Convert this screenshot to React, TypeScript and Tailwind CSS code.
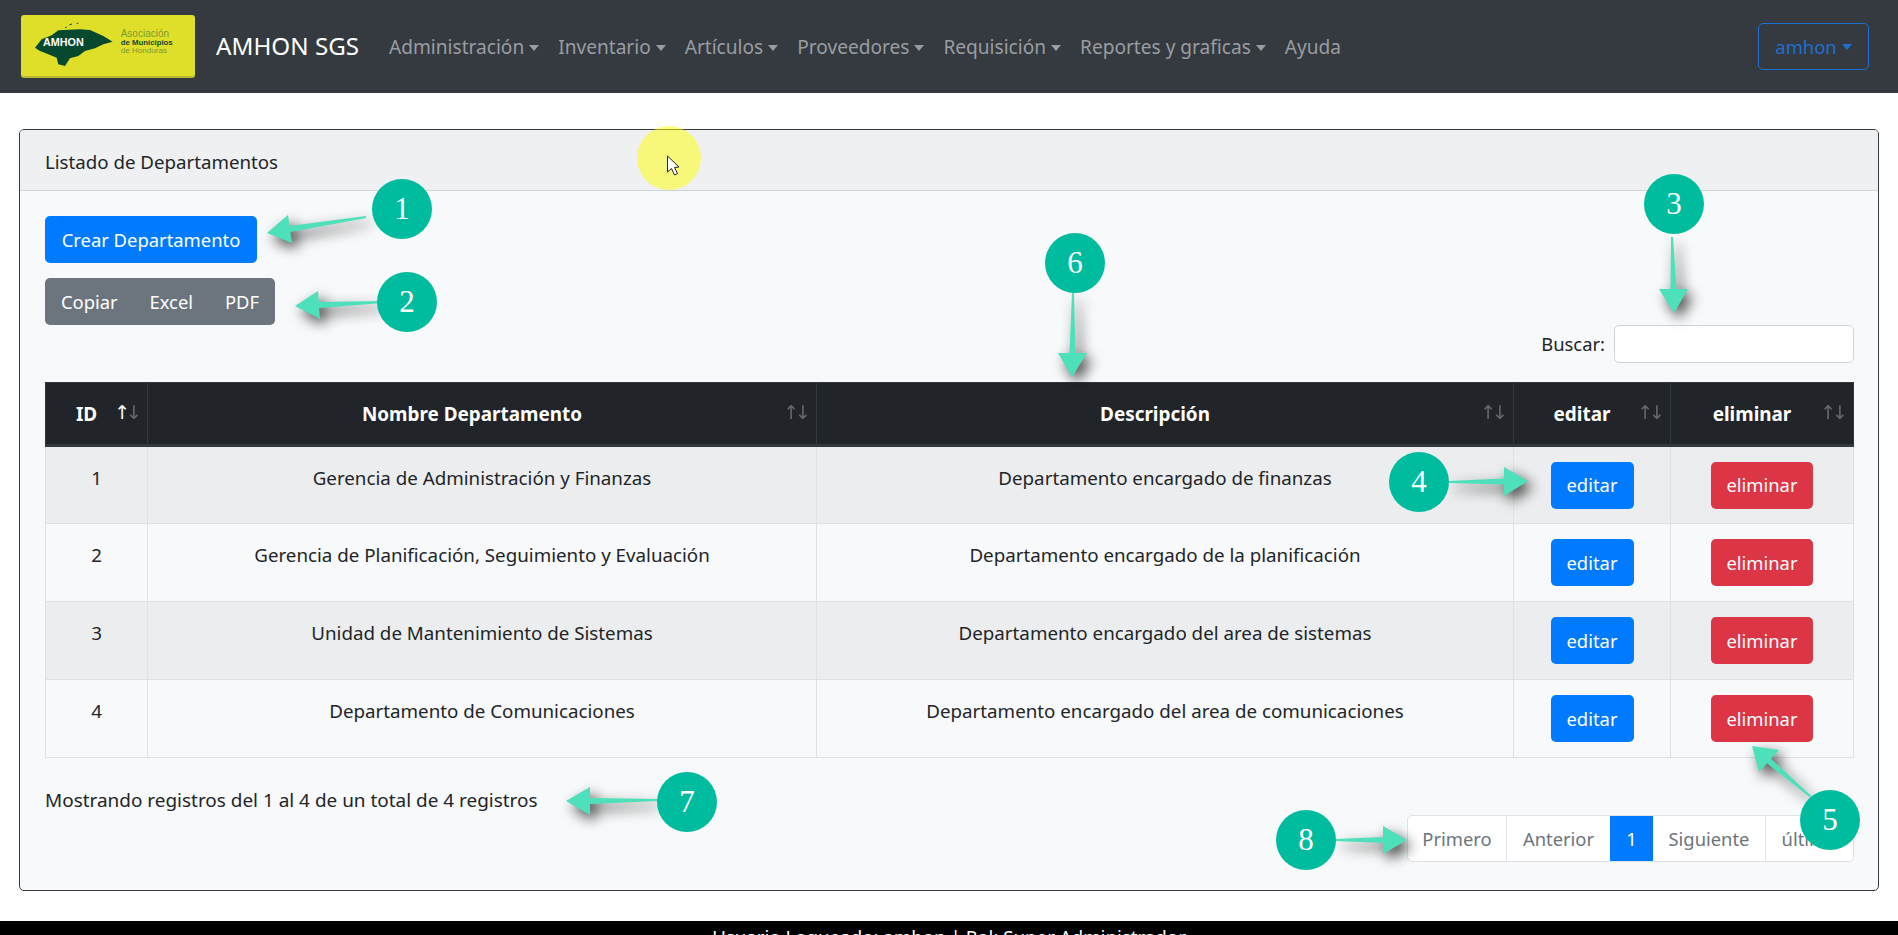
import React from "react";

const F = "[font-family:'Noto_Sans','Open_Sans',sans-serif]";

function Caret() {
  return <span className="ml-[5px] inline-block w-0 h-0 border-x-[5.5px] border-x-transparent border-t-[6px] border-t-current align-[3px]" />;
}

function Logo() {
  return (
    <div className="w-[174px] h-[63px] bg-[#dfdf2a] rounded-[3px] border-b-2 border-[#b8b832] shrink-0">
      <svg viewBox="0 0 174 61" className="w-full h-full">
        <g transform="translate(-21 -14) scale(0.3333)">
          <path d="M105 140 L125 115 L155 103 L175 88 L240 85 L270 87 L310 105 L338 122 L310 130 L285 142 L255 150 L235 165 L210 172 L195 195 L175 190 L170 170 L145 160 L120 150 Z" fill="#07492f" />
          <path d="M195 80 l5 -2 M208 72 l8 -3 M230 68 l5 -2" stroke="#07492f" strokeWidth="3" fill="none" />
        </g>
        <text x="22" y="31" fill="#fff" fontSize="10.8" fontWeight="700" fontFamily="'Liberation Sans', sans-serif">AMHON</text>
        <text x="99.7" y="22" fill="#7a9a30" fontSize="10" fontFamily="'Liberation Sans', sans-serif">Asociación</text>
        <text x="99.7" y="30" fill="#14482c" fontSize="7.8" fontWeight="700" fontFamily="'Liberation Sans', sans-serif">de Municipios</text>
        <text x="99.7" y="38" fill="#7a9a30" fontSize="8.1" fontFamily="'Liberation Sans', sans-serif">de Honduras</text>
      </svg>
    </div>
  );
}

function Th({ children, up = false }: { children: React.ReactNode; up?: boolean }) {
  return (
    <th className="relative border border-[#32383e] border-b-[3px] font-bold text-[18.9px] text-white pr-[20px] pt-[2px] h-[63px]">
      {children}
      <span className="absolute right-[5px] top-[17px] text-[19px] leading-[24px] font-normal whitespace-nowrap [font-family:'DejaVu_Sans',sans-serif] tracking-[-4px] pr-[4px]">
        <span className={up ? "opacity-100 text-white" : "opacity-30"}>↑</span>
        <span className="opacity-30">↓</span>
      </span>
    </th>
  );
}

function Btn({ color, w, children }: { color: string; w: string; children: string }) {
  return <span className={`inline-flex items-center justify-center h-[47px] rounded-[5px] text-white ${color} ${w}`}>{children}</span>;
}

const rows = [
  ["1", "Gerencia de Administración y Finanzas", "Departamento encargado de finanzas"],
  ["2", "Gerencia de Planificación, Seguimiento y Evaluación", "Departamento encargado de la planificación"],
  ["3", "Unidad de Mantenimiento de Sistemas", "Departamento encargado del area de sistemas"],
  ["4", "Departamento de Comunicaciones", "Departamento encargado del area de comunicaciones"],
];

function Bubble({ n, x, y }: { n: number; x: number; y: number }) {
  return (
    <g>
      <circle cx={x} cy={y} r={30} fill="#00bc9f" />
      <text x={x} y={y + 10} textAnchor="middle" fill="#fff" fontSize="31" fontFamily="'Liberation Serif', serif">{n}</text>
    </g>
  );
}

function Arrow({ from, tip, a, b }: { from: [number, number]; tip: [number, number]; a: [number, number]; b: [number, number] }) {
  const mid: [number, number] = [(a[0] + b[0]) / 2, (a[1] + b[1]) / 2];
  const dx = mid[0] - from[0], dy = mid[1] - from[1];
  const len = Math.hypot(dx, dy) || 1;
  const nx = -dy / len, ny = dx / len;
  const d = `M${from[0] + nx},${from[1] + ny} L${mid[0] + nx * 3},${mid[1] + ny * 3} L${a[0]},${a[1]} L${tip[0]},${tip[1]} L${b[0]},${b[1]} L${mid[0] - nx * 3},${mid[1] - ny * 3} L${from[0] - nx},${from[1] - ny} Z`;
  return <path d={d} fill="#4de0bb" className="[filter:drop-shadow(5px_6px_7px_rgba(0,0,0,0.75))]" />;
}

function Overlay() {
  return (
    <svg className="absolute left-0 top-0 pointer-events-none" width="1898" height="935" viewBox="0 0 1898 935">
      <Arrow from={[366, 217]} tip={[267, 233]} a={[288, 215]} b={[292, 243]} />
      <Arrow from={[383, 302]} tip={[295, 306]} a={[318, 291]} b={[320, 319]} />
      <Arrow from={[1672, 237]} tip={[1674, 313]} a={[1659, 289]} b={[1688, 289]} />
      <Arrow from={[1449, 482]} tip={[1528, 481]} a={[1504, 467]} b={[1504, 496]} />
      <Arrow from={[1811, 797]} tip={[1752, 746]} a={[1779, 750]} b={[1759, 772]} />
      <Arrow from={[1073, 293]} tip={[1072, 377]} a={[1058, 353]} b={[1087, 353]} />
      <Arrow from={[658, 800]} tip={[566, 801]} a={[590, 787]} b={[590, 815]} />
      <Arrow from={[1336, 840]} tip={[1407, 840]} a={[1383, 826]} b={[1383, 854]} />
      <Bubble n={1} x={402} y={209} />
      <Bubble n={2} x={407} y={302} />
      <Bubble n={3} x={1674} y={204} />
      <Bubble n={4} x={1419} y={482} />
      <Bubble n={5} x={1830} y={820} />
      <Bubble n={6} x={1075} y={263} />
      <Bubble n={7} x={687} y={802} />
      <Bubble n={8} x={1306} y={840} />
      <circle cx={669} cy={158} r={32} fill="#ffff00" fillOpacity={0.5} />
      <path d="M667.5 156 L667.5 172 L671.5 168.5 L674.5 175 L677.5 173.5 L674.5 167.5 L679 167 Z" fill="#fff" stroke="#222" strokeWidth="1" />
    </svg>
  );
}

export default function App() {
  return (
    <div className={`relative w-[1898px] h-[935px] overflow-hidden bg-white text-[#212529] text-[18.4px] flex flex-col ${F}`}>
      <nav className="h-[93px] shrink-0 bg-[#343a40] flex items-center pl-[21px] pr-[29px]">
        <Logo />
        <span className="ml-[21px] text-[24.2px] text-white">AMHON SGS</span>
        <div className="ml-[30px] pt-[2px] flex gap-[19px] text-[19.1px] text-[#9a9da0]">
          {["Administración", "Inventario", "Artículos", "Proveedores", "Requisición", "Reportes y graficas"].map((t) => (
            <span key={t} className="whitespace-nowrap">{t}<Caret /></span>
          ))}
          <span>Ayuda</span>
        </div>
        <span className="ml-auto w-[111px] h-[47px] border border-[#1f6fd0] rounded-[5px] text-[#1f6fd0] flex items-center justify-center">amhon<Caret /></span>
      </nav>
      <main className="flex-1 px-[19px] pt-[36px]">
        <section className="h-[762px] border border-[#343a40] rounded-[5px] bg-[#f8f9fa] overflow-hidden">
          <header className="h-[61px] bg-[#eff0f2] border-b border-[#d2d3d5] flex items-center px-[25px] pt-[5px] text-[18.7px]">Listado de Departamentos</header>
          <div className="pl-[25px] pr-[24px] pt-[25px]">
            <Btn color="bg-[#007bff]" w="w-[212px]">Crear Departamento</Btn>
            <div className="mt-[15px] w-[230px] h-[47px] rounded-[5px] bg-[#6c757d] text-white flex items-center justify-between px-[16px]">
              <span>Copiar</span><span>Excel</span><span>PDF</span>
            </div>
            <div className="flex justify-end items-center gap-[9px] h-[38px]">
              <span>Buscar:</span>
              <span className="w-[240px] h-[38px] bg-white border border-[#ced4da] rounded-[5px]" />
            </div>
            <table className="mt-[19px] w-[1808px] table-fixed border-collapse text-center">
              <colgroup>
                <col className="w-[102px]" />
                <col className="w-[669px]" />
                <col className="w-[697px]" />
                <col className="w-[157px]" />
                <col className="w-[183px]" />
              </colgroup>
              <thead className="bg-[#212529]">
                <tr>
                  <Th up>ID</Th>
                  <Th>Nombre Departamento</Th>
                  <Th>Descripción</Th>
                  <Th>editar</Th>
                  <Th>eliminar</Th>
                </tr>
              </thead>
              <tbody>
                {rows.map((r, i) => (
                  <tr key={r[0]} className={i % 2 === 0 ? "bg-[#ecedee]" : ""}>
                    {r.map((c) => (
                      <td key={c} className="border border-[#dee2e6] h-[78px] align-top pt-[17px] leading-[28px] text-[18.75px]">{c}</td>
                    ))}
                    <td className="border border-[#dee2e6] h-[78px]"><Btn color="bg-[#007bff]" w="w-[83px]">editar</Btn></td>
                    <td className="border border-[#dee2e6] h-[78px]"><Btn color="bg-[#dc3545]" w="w-[102px]">eliminar</Btn></td>
                  </tr>
                ))}
              </tbody>
            </table>
            <div className="mt-[28px] leading-[28px] text-[18.95px]">Mostrando registros del 1 al 4 de un total de 4 registros</div>
            <div className="flex justify-end mt-[1px]">
              <div className="flex h-[47px] bg-white border border-[#dee2e6] rounded-[5px] text-[#6c757d] overflow-hidden">
                <span className="w-[99px] flex items-center justify-center border-r border-[#dee2e6]">Primero</span>
                <span className="w-[103px] flex items-center justify-center">Anterior</span>
                <span className="w-[43px] flex items-center justify-center bg-[#007bff] text-white">1</span>
                <span className="w-[113px] flex items-center justify-center border-r border-[#dee2e6]">Siguiente</span>
                <span className="w-[87px] flex items-center justify-center">último</span>
              </div>
            </div>
          </div>
        </section>
      </main>
      <footer className="h-[14px] shrink-0 bg-black text-white text-center text-[18.7px] leading-[28px] pt-[2px]">Usuario Logueado: amhon | Rol: Super Administrador</footer>
      <Overlay />
    </div>
  );
}
